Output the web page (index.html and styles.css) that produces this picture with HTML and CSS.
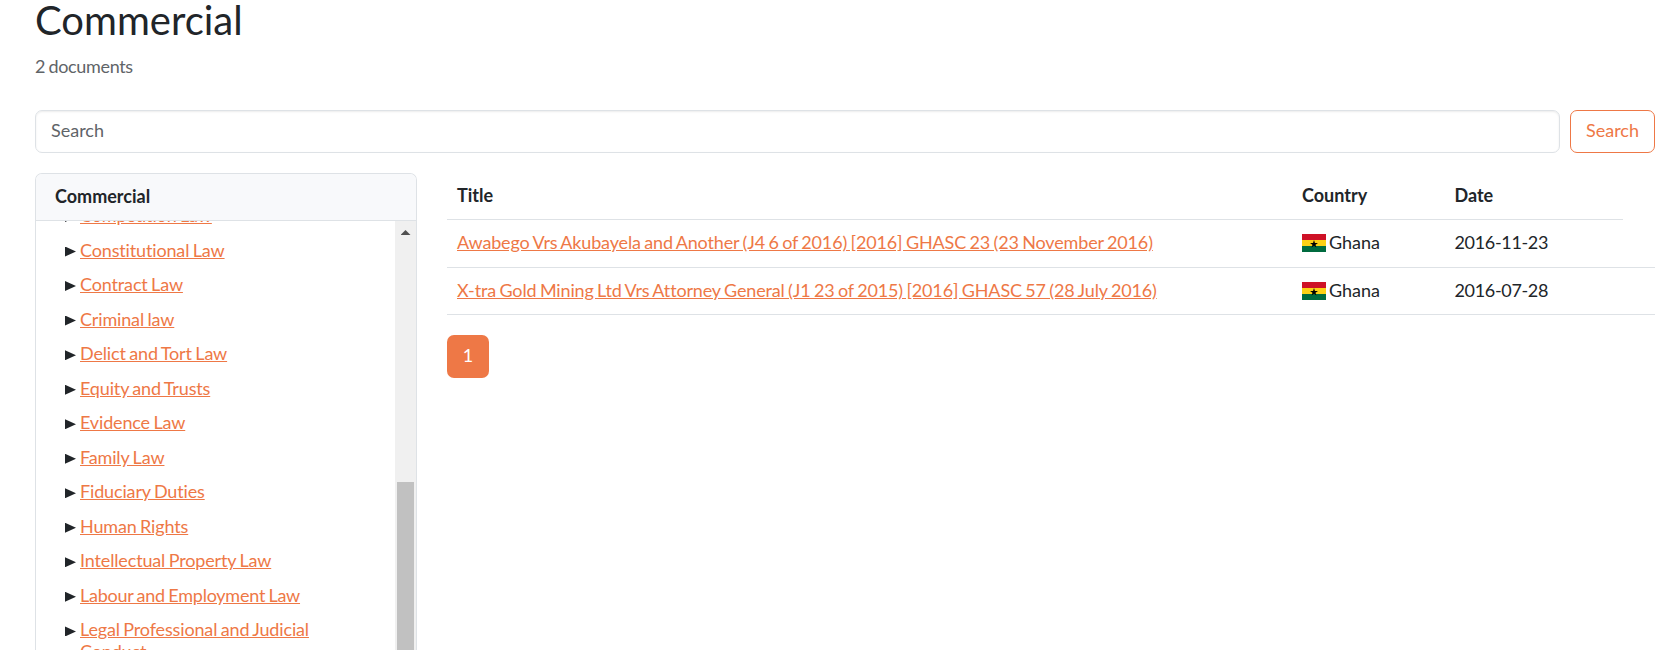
FILE: index.html
```html
<!DOCTYPE html>
<html lang="en">
<head>
<meta charset="utf-8">
<title>Commercial</title>
<link rel="stylesheet" href="styles.css">
</head>
<body>
<svg class="defs" width="0" height="0">
  <symbol id="ghana" viewBox="0 0 24 18">
    <path fill="#ce1126" d="M0 0h24v6H0z"/>
    <path fill="#fcd116" d="M0 6h24v6H0z"/>
    <path fill="#006b3f" d="M0 12h24v6H0z"/>
    <path fill="#000" d="M12 6l.95 2.9H16l-2.5 1.8.95 2.9L12 11.8l-2.45 1.8.95-2.9L8 8.9h3.05z"/>
  </symbol>
</svg>
<main class="page">
  <h1>Commercial</h1>
  <p class="count">2 documents</p>
  <form class="search">
    <input class="field" type="text" placeholder="Search">
    <button class="btn" type="button">Search</button>
  </form>
  <div class="columns">
    <aside class="card">
      <div class="card-header">Commercial</div>
      <div class="card-body">
        <ul class="tree">
          <li><a href="#">Competition Law</a></li>
          <li><a href="#">Constitutional Law</a></li>
          <li><a href="#">Contract Law</a></li>
          <li><a href="#">Criminal law</a></li>
          <li><a href="#">Delict and Tort Law</a></li>
          <li><a href="#">Equity and Trusts</a></li>
          <li><a href="#">Evidence Law</a></li>
          <li><a href="#">Family Law</a></li>
          <li><a href="#">Fiduciary Duties</a></li>
          <li><a href="#">Human Rights</a></li>
          <li><a href="#">Intellectual Property Law</a></li>
          <li><a class="tight" href="#">Labour and Employment Law</a></li>
          <li><a href="#">Legal Professional and Judicial Conduct</a></li>
        </ul>
        <div class="scrollbar"><span class="arrow"></span><span class="thumb"></span></div>
      </div>
    </aside>
    <section class="results">
      <div class="row head"><span>Title</span><span>Country</span><span>Date</span></div>
      <div class="row"><a href="#">Awabego Vrs Akubayela and Another (J4 6 of 2016) [2016] GHASC 23 (23 November 2016)</a><span class="country"><svg class="flag"><use href="#ghana"/></svg>Ghana</span><span class="date">2016-11-23</span></div>
      <div class="row last"><a href="#">X-tra Gold Mining Ltd Vrs Attorney General (J1 23 of 2015) [2016] GHASC 57 (28 July 2016)</a><span class="country"><svg class="flag"><use href="#ghana"/></svg>Ghana</span><span class="date">2016-07-28</span></div>
      <div class="pager"><a class="current" href="#">1</a></div>
    </section>
  </div>
</main>
</body>
</html>
```
FILE: styles.css
```css
* { box-sizing: border-box; }
body {
  margin: 0;
  height: 650px;
  overflow: hidden;
  background: #fff;
  color: #212529;
  font: 18px/27px Lato, "Liberation Sans", sans-serif;
  font-variant-ligatures: none;
  word-spacing: -1px;
}
.defs { display: block; width: 0; height: 0; }
.page {
  height: 650px;
  padding: 0 23px 0 35px;
  display: flex;
  flex-direction: column;
}
h1 { margin: 0; height: 53px; font-size: 40px; line-height: 41px; font-weight: 400; }
.count { margin: 0; height: 57px; color: #5f6468; letter-spacing: -.33px; }
a { color: #ee7846; text-decoration: underline; letter-spacing: -.15px; }
.search { display: flex; gap: 10px; height: 43px; margin: 0 0 20px; }
.field {
  flex: 1;
  padding: 0 15px 2px;
  border: 1px solid #dee2e6;
  border-radius: 7px;
  font: inherit;
  box-shadow: inset 0 1px 2px rgba(0, 0, 0, .075);
}
.field::placeholder { color: #5f6468; opacity: 1; }
.btn {
  width: 85px;
  padding: 0 0 2px;
  border: 1px solid #ee7846;
  border-radius: 7px;
  background: #fff;
  color: #ee7846;
  font: inherit;
}
.columns { display: flex; gap: 30px; flex: 1; min-height: 0; }
.card {
  width: 382px;
  border: 1px solid #dee2e6;
  border-bottom: 0;
  border-radius: 7px 7px 0 0;
  overflow: hidden;
  display: flex;
  flex-direction: column;
}
.card-header {
  height: 47px;
  flex: none;
  padding: 9px 19px;
  background: #f8f9fb;
  border-bottom: 1px solid #dee2e6;
  font-weight: 700;
}
.card-body { display: flex; flex: 1; min-height: 0; overflow: hidden; }
.tree { list-style: none; margin: -16px 0 0; padding: 0 60px 0 29px; flex: 1; line-height: 21.6px; }
.tree li { display: flex; gap: 5px; margin-bottom: 12.95px; }
.tree li::before {
  content: "";
  flex: none;
  width: 11px;
  height: 10px;
  margin: 7px -1px 0 0;
  background: #212529;
  clip-path: polygon(0 0, 100% 50%, 0 100%);
}
.tree .tight { letter-spacing: -.24px; }
.scrollbar { width: 21px; background: #f0f0f0; display: flex; flex-direction: column; align-items: center; padding-top: 9px; }
.arrow { width: 10px; height: 5px; background: #505050; clip-path: polygon(50% 0, 100% 100%, 0 100%); }
.thumb { width: 17px; flex: 1; margin-top: 247px; background: #c1c1c1; }
.results { flex: 1; }
.row {
  display: grid;
  grid-template-columns: 845px 152.5px 1fr;
  height: 48px;
  padding: 9px 0 0 10px;
  border-bottom: 1px solid #dee2e6;
}
.row.head { height: 47px; margin-right: 32px; font-weight: 700; }
.row.last { height: 47px; }
.country { display: flex; gap: 3px; }
.flag { width: 24px; height: 18px; margin-top: 5px; }
.date { letter-spacing: -.33px; }
.pager { display: flex; margin-top: 20px; }
.current {
  width: 42px;
  height: 43px;
  border-radius: 7px;
  background: #ee7846;
  color: #fff;
  line-height: 41px;
  text-align: center;
  text-decoration: none;
}
```
